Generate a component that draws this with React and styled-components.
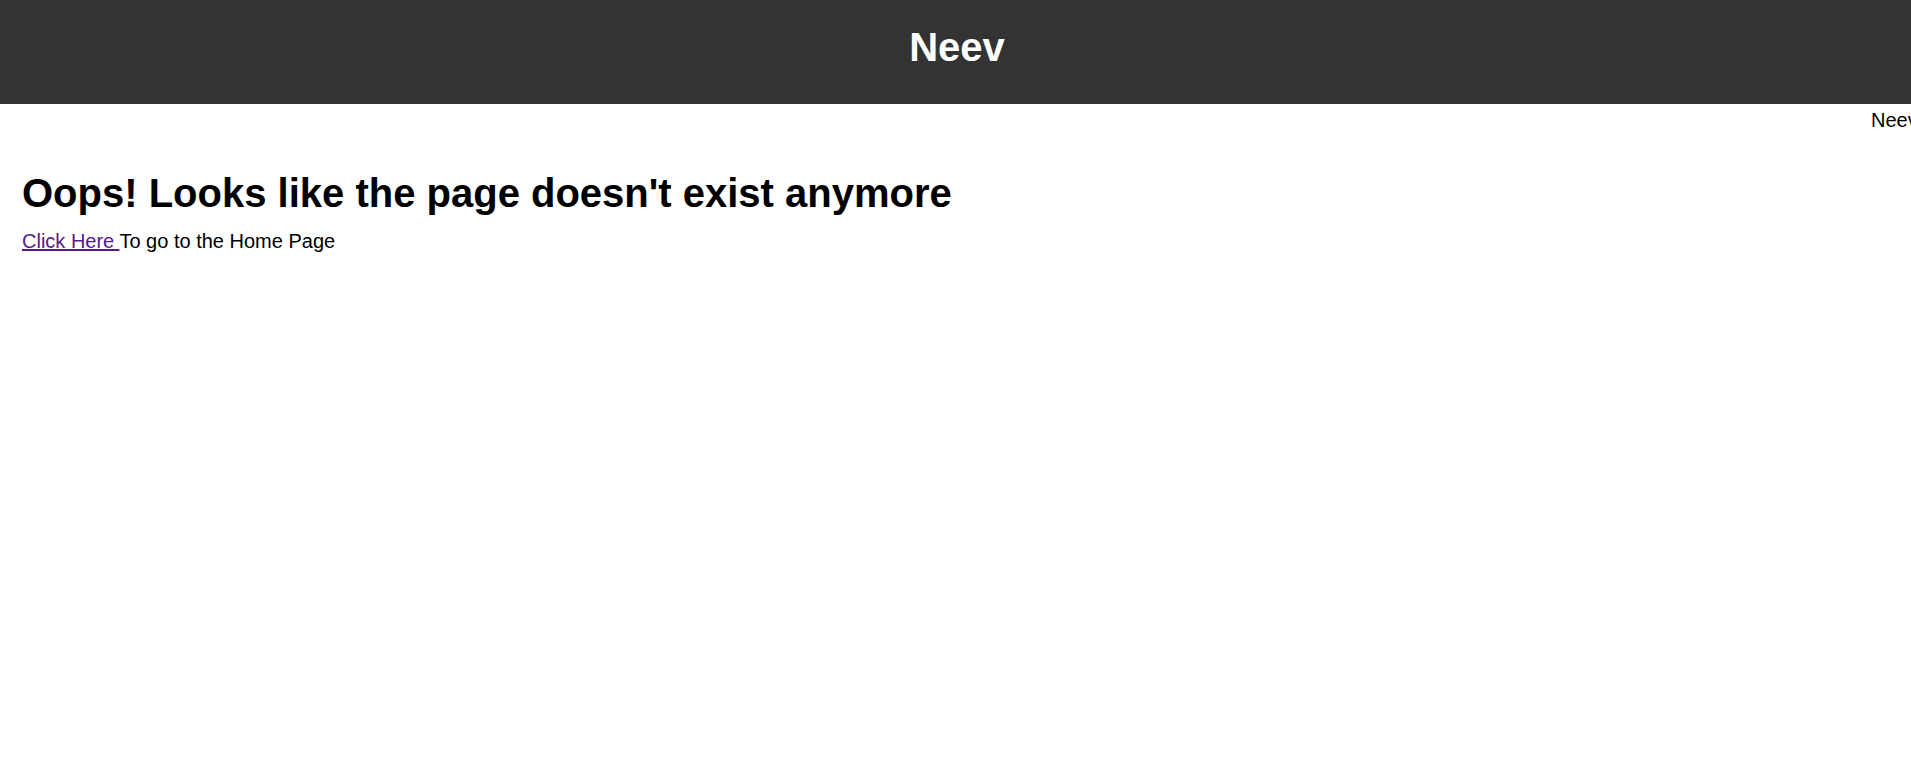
import React from "react";
import styled, { createGlobalStyle } from "styled-components";

const GlobalStyle = createGlobalStyle`
  body {
    margin: 0;
    font-family: "Liberation Sans", Arial, sans-serif;
    background: #ffffff;
    color: #000000;
  }
`;

const Header = styled.header`
  height: 104px;
  background-color: #333333;
  display: flex;
  justify-content: center;
  align-items: flex-start;
`;

const Title = styled.h1`
  margin: 24px 0 0 3px;
  color: #ffffff;
  font-size: 40px;
  line-height: 46px;
  font-weight: bold;
`;

const Ticker = styled.div`
  margin-top: 5px;
  height: 23px;
  overflow: hidden;
  white-space: nowrap;
  font-size: 20px;
  line-height: 23px;
  padding-left: 1871px;
`;

const Main = styled.main`
  padding: 0 22px;
`;

const Heading = styled.h2`
  margin: 38px 0 0;
  font-size: 40px;
  line-height: 46px;
  font-weight: bold;
`;

const Text = styled.p`
  margin: 14px 0 0;
  font-size: 20px;
  line-height: 23px;
`;

const HomeLink = styled.a`
  color: #551a8b;
  text-decoration: underline;
`;

export default function App() {
  return (
    <>
      <GlobalStyle />
      <Header>
        <Title>Neev</Title>
      </Header>
      <Ticker>Neev</Ticker>
      <Main>
        <Heading>Oops! Looks like the page doesn't exist anymore</Heading>
        <Text>
          <HomeLink href="#">Click Here </HomeLink>To go to the Home Page
        </Text>
      </Main>
    </>
  );
}
